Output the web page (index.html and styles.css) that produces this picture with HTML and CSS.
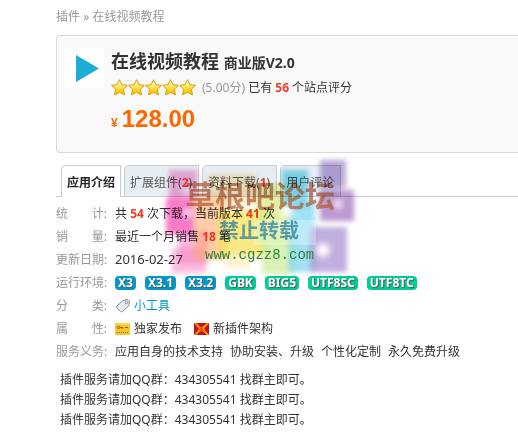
FILE: index.html
```html
<!DOCTYPE html>
<html lang="zh-CN">
<head>
  <meta charset="UTF-8" />
  <meta name="viewport" content="width=device-width, initial-scale=1.0"/>
  <title>在线视频教程</title>
  <link rel="stylesheet" href="styles.css">
</head>
<body>
  <nav class="crumbs"><a href="#">插件</a> » <a href="#">在线视频教程</a></nav>

  <header class="app">
    <svg class="logo" viewBox="0 0 40 40" aria-hidden="true">
      <rect width="40" height="40" fill="#fff"/>
      <path d="M12 7L35 20.500L12 34Z" fill="#1badd6"/>
    </svg>
    <div class="info">
      <h1>在线视频教程 <small>商业版V2.0</small></h1>
      <div class="rating">
        <svg class="stars" viewBox="0 0 85 17" role="img" aria-label="5星">
          <defs>
            <linearGradient id="gold" x1="0" y1="0" x2="0" y2="1">
              <stop offset="0.200" stop-color="#fff8b0"/>
              <stop offset="0.800" stop-color="#ffc800"/>
            </linearGradient>
            <path id="star" d="M8.500 0.800L10.900 5.700L16.300 6.400L12.400 10.200L13.400 15.900L8.500 13.300L3.600 15.900L4.600 10.200L0.700 6.400L6.100 5.700Z" fill="url(#gold)" stroke="#d79c0a" stroke-linejoin="round"/>
          </defs>
          <use href="#star"/>
          <use href="#star" x="17"/>
          <use href="#star" x="34"/>
          <use href="#star" x="51"/>
          <use href="#star" x="68"/>
        </svg>
        <span><span class="score">(5.00分)</span> 已有 <b>56</b> 个站点评分</span>
      </div>
      <p class="price"><span>¥</span>128.00</p>
    </div>
  </header>

  <main>
    <nav class="tabs">
      <a class="active" href="#">应用介绍</a>
      <a href="#">扩展组件(<b>2</b>)</a>
      <a href="#">资料下载(<b>1</b>)</a>
      <a href="#">用户评论</a>
    </nav>

    <dl class="facts">
      <dt><span>统</span><span>计:</span></dt>
      <dd>共 <b>54</b> 次下载，当前版本 <b>41</b> 次</dd>
      <dt><span>销</span><span>量:</span></dt>
      <dd>最近一个月销售 <b>18</b> 笔</dd>
      <dt>更新日期:</dt>
      <dd class="date">2016-02-27</dd>
      <dt>运行环境:</dt>
      <dd class="badges">
        <span class="badge blue">X3</span>
        <span class="badge blue">X3.1</span>
        <span class="badge blue">X3.2</span>
        <span class="badge">GBK</span>
        <span class="badge">BIG5</span>
        <span class="badge">UTF8SC</span>
        <span class="badge">UTF8TC</span>
      </dd>
      <dt><span>分</span><span>类:</span></dt>
      <dd class="icons">
        <a href="#">
          <svg width="16" height="16" viewBox="0 0 16 16" aria-hidden="true">
            <path d="M8 2.500L13 1.500L14.500 3L14 7.500L7.500 13.500Q6.500 14.500 5.500 13.500L2 10Q1.200 9 2 8Z" fill="#e8edf2" stroke="#87919c"/>
            <circle cx="11.500" cy="4.500" r="1.300" fill="#fff" stroke="#87919c"/>
          </svg>小工具</a>
      </dd>
      <dt><span>属</span><span>性:</span></dt>
      <dd class="icons">
        <span>
          <svg width="16" height="16" viewBox="0 0 16 16" aria-hidden="true">
            <rect y="2" width="15" height="12" rx="1" fill="#f7c52d"/>
            <path d="M1 3H14" stroke="#ffe27a"/>
            <circle cx="3.500" cy="6.500" r="1.200" fill="none" stroke="#8a640f"/>
            <path d="M5 6.500H8M7 6.500V8M10 6.500H13" stroke="#8a640f"/>
            <path d="M2 11.500H13" stroke="#8a640f" stroke-dasharray="1 1"/>
          </svg>独家发布</span>
        <span>
          <svg width="16" height="16" viewBox="0 0 16 16" aria-hidden="true">
            <rect y="2" width="15" height="12" fill="#c4101c"/>
            <path d="M0 2H2L7.500 6.500L13 2H15L10 8L15 14H13L7.500 9.500L2 14H0L5 8Z" fill="#ff9c0c"/>
            <path d="M3 4L7.500 7L10 6L8.500 8L12 12L7.500 9L5 10L6.500 8Z" fill="#e8420c"/>
          </svg>新插件架构</span>
      </dd>
      <dt>服务义务:</dt>
      <dd class="duties"><span>应用自身的技术支持</span><span>协助安装、升级</span><span>个性化定制</span><span>永久免费升级</span></dd>
    </dl>

    <div class="notes">
      <p>插件服务请加QQ群：434305541 找群主即可。</p>
      <p>插件服务请加QQ群：434305541 找群主即可。</p>
      <p>插件服务请加QQ群：434305541 找群主即可。</p>
    </div>

    <svg class="watermark" viewBox="0 0 200 130" aria-hidden="true">
      <defs>
        <filter id="soft" x="-10%" y="-10%" width="120%" height="120%"><feGaussianBlur stdDeviation="2.500"/></filter>
        <filter id="glow" x="-50%" y="-50%" width="200%" height="200%"><feGaussianBlur stdDeviation="3"/></filter>
      </defs>
      <g filter="url(#soft)">
        <rect x="9" y="20" width="28" height="30" fill="#f58acb" opacity="0.700"/>
        <rect x="6" y="48" width="28" height="36" fill="#f550b8" opacity="0.750"/>
        <rect x="12" y="98" width="34" height="25" fill="#f67dc0" opacity="0.500"/>
        <rect x="18" y="80" width="30" height="34" fill="#f67dc0" opacity="0.550"/>
        <rect x="34" y="46" width="32" height="64" fill="#ffab72" opacity="0.600"/>
        <rect x="48" y="24" width="48" height="30" fill="#f6d58c" opacity="0.500"/>
        <rect x="58" y="60" width="48" height="46" fill="#f7e052" opacity="0.700"/>
        <rect x="66" y="104" width="24" height="14" fill="#fbe7a0" opacity="0.500"/>
        <rect x="96" y="34" width="34" height="60" fill="#d4ea80" opacity="0.700"/>
        <rect x="102" y="84" width="34" height="40" fill="#c5ec8e" opacity="0.650"/>
        <rect x="122" y="20" width="26" height="38" fill="#52cfe4" opacity="0.700"/>
        <rect x="128" y="50" width="27" height="72" fill="#79d4f2" opacity="0.700"/>
        <rect x="160" y="10" width="26" height="28" fill="#a183c6" opacity="0.700"/>
        <rect x="160" y="40" width="34" height="31" fill="#a578c2" opacity="0.750"/>
        <rect x="150" y="77" width="37" height="45" fill="#a58bd0" opacity="0.700"/>
      </g>
      <g fill="#fff" filter="url(#glow)">
        <circle cx="163" cy="100" r="7"/>
        <circle cx="178" cy="54" r="4"/>
        <circle cx="127" cy="61" r="6"/>
        <circle cx="28" cy="63" r="4"/>
        <circle cx="27" cy="40" r="4"/>
      </g>
      <rect x="94" y="70" width="62" height="25" fill="#fff" opacity="0.300"/>
      <text class="wm-title" x="25" y="57">草根吧论坛</text>
      <text class="wm-sub" x="59" y="88">禁止转载</text>
      <text class="wm-url" x="45" y="109">www.cgzz8.com</text>
    </svg>
  </main>
</body>
</html>
```
FILE: styles.css
```css
body {
  margin: 0;
  padding: 7px 0 0 56px;
  font: 12px/20px "Noto Sans", "Noto Sans CJK SC", sans-serif;
  color: #333;
  background: #fff;
}
h1, p, dl, dd {
  margin: 0;
}
a {
  color: inherit;
  text-decoration: none;
}
b {
  color: #f03c28;
}
.crumbs {
  color: #999;
  margin-bottom: 8px;
}
.app {
  display: flex;
  gap: 7px;
  padding: 12px 0 15px 7px;
  border: 1px solid #d9d9d9;
  border-right: none;
  border-radius: 4px 0 0 4px;
  background: #f9f9f9;
}
.logo {
  width: 40px;
  height: 40px;
}
h1 {
  font-size: 18px;
  line-height: 26px;
}
h1 small {
  font-size: 14px;
}
.rating {
  display: flex;
  align-items: center;
  gap: 6px;
  height: 24px;
}
.stars {
  width: 85px;
  height: 17px;
  margin-bottom: 2px;
}
.score {
  color: #999;
}
.price {
  margin-top: 5px;
  font: bold 24px/28px "Liberation Sans", sans-serif;
  color: #f60;
}
.price span {
  margin-right: 4px;
  font-size: 12px;
}
main {
  position: relative;
  margin-top: 12px;
}
.tabs {
  display: flex;
  gap: 3px;
  padding-left: 5px;
  border-bottom: 1px solid #ccc;
}
.tabs a {
  height: 30px;
  padding: 0 6px 0 5px;
  line-height: 34px;
  color: #555;
  background: #e6eef4;
  border: 1px solid #ccc;
  border-bottom: none;
  border-radius: 5px 0 0 0;
}
.tabs .active {
  margin-bottom: -1px;
  padding: 0 5px;
  height: 31px;
  font-weight: bold;
  color: #222;
  background: #fff;
}
.facts {
  display: grid;
  grid-template-columns: 51px 1fr;
  column-gap: 8px;
  grid-auto-rows: 23px;
  padding-top: 5px;
  line-height: 23px;
  white-space: nowrap;
}
.facts dt {
  display: flex;
  justify-content: space-between;
  color: #999;
}
.facts .date {
  font-size: 13px;
}
.badges, .icons, .duties {
  display: flex;
  align-items: center;
}
.badges {
  gap: 9px;
}
.badge {
  padding: 0 3px;
  border-radius: 4px;
  line-height: 14px;
  font-weight: bold;
  color: #fff;
  background: #0c9;
  text-shadow: 1px 1px 1px #555;
}
.badge.blue {
  background: #09c;
}
.icons {
  gap: 12px;
}
.icons a, .icons span {
  display: flex;
  align-items: center;
  gap: 3px;
}
.icons a {
  color: #09c;
}
.duties {
  gap: 7px;
}
.notes {
  padding: 7px 0 0 4px;
}
.watermark {
  position: absolute;
  left: 104px;
  top: -15px;
  width: 200px;
  height: 130px;
  mix-blend-mode: multiply;
  pointer-events: none;
}
.wm-title, .wm-sub {
  font-family: "Noto Sans CJK SC", sans-serif;
  font-weight: bold;
}
.wm-title {
  font-size: 30px;
  fill: #b0562f;
  opacity: 0.7;
}
.wm-sub {
  font-size: 20px;
  fill: #2c8098;
  opacity: 0.75;
}
.wm-url {
  font: 14px "Liberation Mono", monospace;
  fill: #2f8238;
}
```
